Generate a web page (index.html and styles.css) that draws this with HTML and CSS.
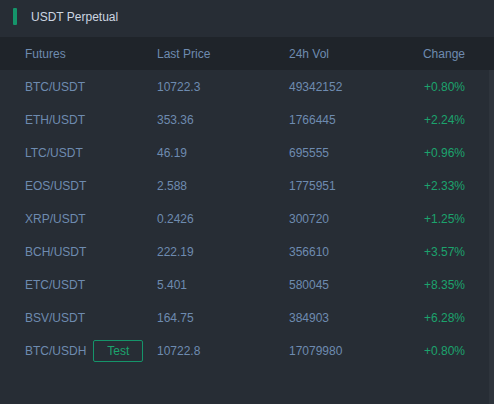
FILE: index.html
```html
<!DOCTYPE html>
<html>
<head>
<meta charset="utf-8">
<link rel="stylesheet" href="styles.css">
</head>
<body>
<div class="panel">
  <div class="title"><span class="bar"></span><span class="title-text">USDT Perpetual</span></div>
  <div class="thead row">
    <span>Futures</span><span>Last Price</span><span>24h Vol</span><span class="chg">Change</span>
  </div>
  <div class="body">
    <div class="list">
      <div class="row"><span>BTC/USDT</span><span>10722.3</span><span>49342152</span><span class="chg up">+0.80%</span></div>
      <div class="row"><span>ETH/USDT</span><span>353.36</span><span>1766445</span><span class="chg up">+2.24%</span></div>
      <div class="row"><span>LTC/USDT</span><span>46.19</span><span>695555</span><span class="chg up">+0.96%</span></div>
      <div class="row"><span>EOS/USDT</span><span>2.588</span><span>1775951</span><span class="chg up">+2.33%</span></div>
      <div class="row"><span>XRP/USDT</span><span>0.2426</span><span>300720</span><span class="chg up">+1.25%</span></div>
      <div class="row"><span>BCH/USDT</span><span>222.19</span><span>356610</span><span class="chg up">+3.57%</span></div>
      <div class="row"><span>ETC/USDT</span><span>5.401</span><span>580045</span><span class="chg up">+8.35%</span></div>
      <div class="row"><span>BSV/USDT</span><span>164.75</span><span>384903</span><span class="chg up">+6.28%</span></div>
      <div class="row"><span class="sym">BTC/USDH <span class="badge">Test</span></span><span>10722.8</span><span>17079980</span><span class="chg up">+0.80%</span></div>
    </div>
    <div class="track"></div>
  </div>
</div>
</body>
</html>
```
FILE: styles.css
```css
html, body {
  margin: 0;
  padding: 0;
  background: #272d35;
}
body {
  font-family: "Liberation Sans", Arial, sans-serif;
  font-size: 12px;
  width: 494px;
  height: 404px;
  overflow: hidden;
}
.panel {
  display: flex;
  flex-direction: column;
  height: 404px;
}
.title {
  height: 37px;
  display: flex;
  align-items: center;
  padding-left: 13px;
  box-sizing: border-box;
  padding-bottom: 4px;
}
.bar {
  width: 4px;
  height: 17px;
  background: #15946a;
  border-radius: 1px;
  margin-right: 14px;
}
.title-text {
  color: #cdd6e1;
}
.row {
  display: grid;
  grid-template-columns: 132px 132px 1fr auto;
  align-items: center;
  height: 33px;
  padding: 0 24px 0 25px;
  color: #6e8bb0;
}
.thead {
  background: #1f242a;
  padding-right: 29px;
}
.chg {
  text-align: right;
}
.up {
  color: #1ca36d;
}
.body {
  flex: 1;
  display: flex;
}
.list {
  flex: 1;
}
.track {
  width: 5px;
  background: #2e343c;
}
.sym {
  display: flex;
  align-items: center;
}
.badge {
  display: inline-flex;
  align-items: center;
  justify-content: center;
  box-sizing: border-box;
  width: 50px;
  height: 22px;
  margin-left: 7px;
  border: 1px solid #15946a;
  border-radius: 2px;
  color: #1ca36d;
}
```
